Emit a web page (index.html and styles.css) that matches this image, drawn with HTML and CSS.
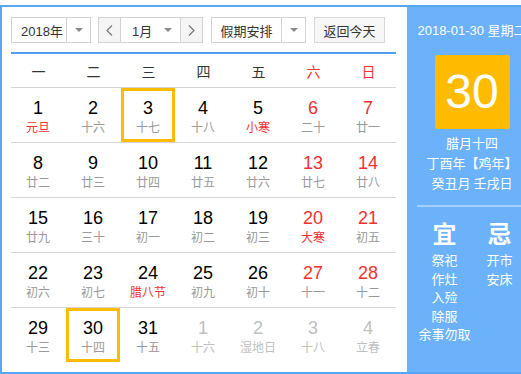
FILE: index.html
```html
<!DOCTYPE html>
<html lang="zh-CN">
<head>
<meta charset="utf-8">
<title>万年历</title>
<link rel="stylesheet" href="styles.css">
</head>
<body>
<div class="cal">
  <div class="left">
    <div class="toolbar">
      <div class="sel year">
        <div class="val">2018年</div>
        <div class="arr"><span class="tri"></span></div>
      </div>
      <div class="sel month">
        <div class="btn prev"><svg width="7" height="11" viewBox="0 0 7 11"><path d="M6 0.5 L1 5.5 L6 10.5" fill="none" stroke="#777" stroke-width="1.2"/></svg></div>
        <div class="mid"><span class="mval">1月</span><span class="tri"></span></div>
        <div class="btn next"><svg width="7" height="11" viewBox="0 0 7 11"><path d="M1 0.5 L6 5.5 L1 10.5" fill="none" stroke="#777" stroke-width="1.2"/></svg></div>
      </div>
      <div class="sel holiday">
        <div class="val">假期安排</div>
        <div class="arr"><span class="tri"></span></div>
      </div>
      <div class="today-btn">返回今天</div>
    </div>
    <div class="blue-line"></div>
    <div class="week-head">
      <span>一</span><span>二</span><span>三</span><span>四</span><span>五</span><span class="red">六</span><span class="red">日</span>
    </div>
    <div class="grid">
      <div class="row">
        <div class="cell"><span class="num">1</span><span class="lunar red">元旦</span></div>
        <div class="cell"><span class="num">2</span><span class="lunar">十六</span></div>
        <div class="cell boxed"><span class="num">3</span><span class="lunar">十七</span></div>
        <div class="cell"><span class="num">4</span><span class="lunar">十八</span></div>
        <div class="cell"><span class="num">5</span><span class="lunar red">小寒</span></div>
        <div class="cell"><span class="num red">6</span><span class="lunar">二十</span></div>
        <div class="cell"><span class="num red">7</span><span class="lunar">廿一</span></div>
      </div>
      <div class="row">
        <div class="cell"><span class="num">8</span><span class="lunar">廿二</span></div>
        <div class="cell"><span class="num">9</span><span class="lunar">廿三</span></div>
        <div class="cell"><span class="num">10</span><span class="lunar">廿四</span></div>
        <div class="cell"><span class="num">11</span><span class="lunar">廿五</span></div>
        <div class="cell"><span class="num">12</span><span class="lunar">廿六</span></div>
        <div class="cell"><span class="num red">13</span><span class="lunar">廿七</span></div>
        <div class="cell"><span class="num red">14</span><span class="lunar">廿八</span></div>
      </div>
      <div class="row">
        <div class="cell"><span class="num">15</span><span class="lunar">廿九</span></div>
        <div class="cell"><span class="num">16</span><span class="lunar">三十</span></div>
        <div class="cell"><span class="num">17</span><span class="lunar">初一</span></div>
        <div class="cell"><span class="num">18</span><span class="lunar">初二</span></div>
        <div class="cell"><span class="num">19</span><span class="lunar">初三</span></div>
        <div class="cell"><span class="num red">20</span><span class="lunar red">大寒</span></div>
        <div class="cell"><span class="num red">21</span><span class="lunar">初五</span></div>
      </div>
      <div class="row">
        <div class="cell"><span class="num">22</span><span class="lunar">初六</span></div>
        <div class="cell"><span class="num">23</span><span class="lunar">初七</span></div>
        <div class="cell"><span class="num">24</span><span class="lunar red">腊八节</span></div>
        <div class="cell"><span class="num">25</span><span class="lunar">初九</span></div>
        <div class="cell"><span class="num">26</span><span class="lunar">初十</span></div>
        <div class="cell"><span class="num red">27</span><span class="lunar">十一</span></div>
        <div class="cell"><span class="num red">28</span><span class="lunar">十二</span></div>
      </div>
      <div class="row">
        <div class="cell"><span class="num">29</span><span class="lunar">十三</span></div>
        <div class="cell boxed"><span class="num">30</span><span class="lunar">十四</span></div>
        <div class="cell"><span class="num">31</span><span class="lunar">十五</span></div>
        <div class="cell other"><span class="num">1</span><span class="lunar">十六</span></div>
        <div class="cell other"><span class="num">2</span><span class="lunar">湿地日</span></div>
        <div class="cell other"><span class="num">3</span><span class="lunar">十八</span></div>
        <div class="cell other"><span class="num">4</span><span class="lunar">立春</span></div>
      </div>
    </div>
  </div>
  <div class="right">
    <div class="date">2018-01-30 星期二</div>
    <div class="bigday">30</div>
    <div class="lunar-info">
      <div>腊月十四</div>
      <div>丁酉年【鸡年】</div>
      <div>癸丑月 壬戌日</div>
    </div>
    <div class="sep"></div>
    <div class="yiji">
      <div class="yj-col">
        <div class="yj-title">宜</div>
        <div class="yj-list">
          <div>祭祀</div><div>作灶</div><div>入殓</div><div>除服</div><div>余事勿取</div>
        </div>
      </div>
      <div class="yj-col">
        <div class="yj-title">忌</div>
        <div class="yj-list">
          <div>开市</div><div>安床</div>
        </div>
      </div>
    </div>
  </div>
</div>
</body>
</html>
```
FILE: styles.css
```css
html, body {
  margin: 0;
  padding: 0;
  background: #fff;
  overflow: hidden;
}
body {
  font-family: "Liberation Sans", "Noto Sans CJK SC", sans-serif;
  color: #333;
}
.cal {
  margin-top: 5px;
  border: 2px solid #58a7f6;
  display: flex;
  width: 535px;
  height: 365px;
}
.left {
  flex: none;
  width: 385px;
  padding: 10px 11px 0 9px;
}
.toolbar {
  display: flex;
  height: 26px;
}
.sel {
  display: flex;
  box-sizing: border-box;
  height: 26px;
  border: 1px solid #d3d3d3;
  background: #fff;
}
.sel .val {
  flex: 1;
  display: flex;
  align-items: center;
  justify-content: center;
  font-size: 13px;
  color: #333;
}
.sel .arr {
  width: 23px;
  border-left: 1px solid #d3d3d3;
  display: flex;
  align-items: center;
  justify-content: center;
}
.tri {
  width: 0;
  height: 0;
  border-left: 4px solid transparent;
  border-right: 4px solid transparent;
  border-top: 4px solid #8a8a8a;
}
.year {
  width: 80px;
  margin-right: 7px;
}
.year .val {
  padding-left: 6px;
}
.month {
  width: 105px;
  margin-right: 8px;
}
.month .btn {
  width: 21px;
  background: #f5f5f5;
  display: flex;
  align-items: center;
  justify-content: center;
}
.month .prev {
  border-right: 1px solid #d3d3d3;
}
.month .next {
  border-left: 1px solid #d3d3d3;
}
.month .mid {
  flex: 1;
  display: flex;
  align-items: center;
  padding: 0 8px 0 11px;
  justify-content: space-between;
  font-size: 13px;
  color: #333;
}
.holiday {
  width: 95px;
  margin-right: 8px;
}
.today-btn {
  width: 71px;
  box-sizing: border-box;
  height: 26px;
  border: 1px solid #d8d8d8;
  background: #f7f7f7;
  display: flex;
  align-items: center;
  justify-content: center;
  font-size: 13px;
  color: #333;
}
.blue-line {
  margin-top: 9px;
  height: 2px;
  background: #4f9ef1;
}
.week-head {
  display: grid;
  grid-template-columns: repeat(7, 55px);
  height: 33px;
  border-bottom: 1px solid #d5d5d5;
  align-items: center;
  justify-items: center;
  font-size: 14px;
  color: #333;
}
.row {
  display: grid;
  grid-template-columns: repeat(7, 55px);
  height: 54px;
  border-bottom: 1px solid #d5d5d5;
}
.row:last-child {
  border-bottom: none;
}
.cell {
  position: relative;
  width: 54px;
  display: flex;
  flex-direction: column;
  align-items: center;
  padding-top: 10px;
  box-sizing: border-box;
}
.num {
  font-size: 18px;
  line-height: 20px;
  color: #000;
}
.lunar {
  margin-top: 2px;
  font-size: 12px;
  line-height: 16px;
  color: #999;
}
.red,
.num.red,
.lunar.red,
.week-head .red {
  color: #f33131;
}
.other .num,
.other .lunar {
  color: #c0c0c0;
}
.boxed::after {
  content: "";
  position: absolute;
  left: 0;
  top: 0;
  width: 54px;
  height: 54px;
  box-sizing: border-box;
  border: 3px solid #ffbb00;
}
.right {
  flex: none;
  width: 130px;
  background: #6cb2fa;
  color: #fff;
  text-align: center;
  font-family: "Noto Sans CJK SC", "Liberation Sans", sans-serif;
}
.date {
  padding-top: 14px;
  font-size: 13px;
  line-height: 20px;
  white-space: nowrap;
  font-family: "Liberation Sans", "Noto Sans CJK SC", sans-serif;
}
.bigday {
  width: 75px;
  height: 74px;
  margin: 14px auto 0;
  background: #ffbb00;
  border-radius: 2px;
  font-size: 48px;
  line-height: 74px;
  font-family: "Liberation Sans", sans-serif;
}
.lunar-info {
  margin-top: 4px;
  font-size: 13px;
  line-height: 20px;
  white-space: nowrap;
}
.sep {
  margin: 12px 0 0 10px;
  width: 110px;
  height: 2px;
  background: #a3cffb;
}
.yiji {
  display: flex;
  margin-left: 10px;
  width: 110px;
}
.yj-col {
  width: 55px;
  display: flex;
  flex-direction: column;
  align-items: center;
}
.yj-title {
  margin-top: 11px;
  font-size: 24px;
  line-height: 30px;
  font-weight: bold;
}
.yj-list {
  margin-top: 3px;
  font-size: 13px;
  line-height: 18.5px;
  white-space: nowrap;
}
```
